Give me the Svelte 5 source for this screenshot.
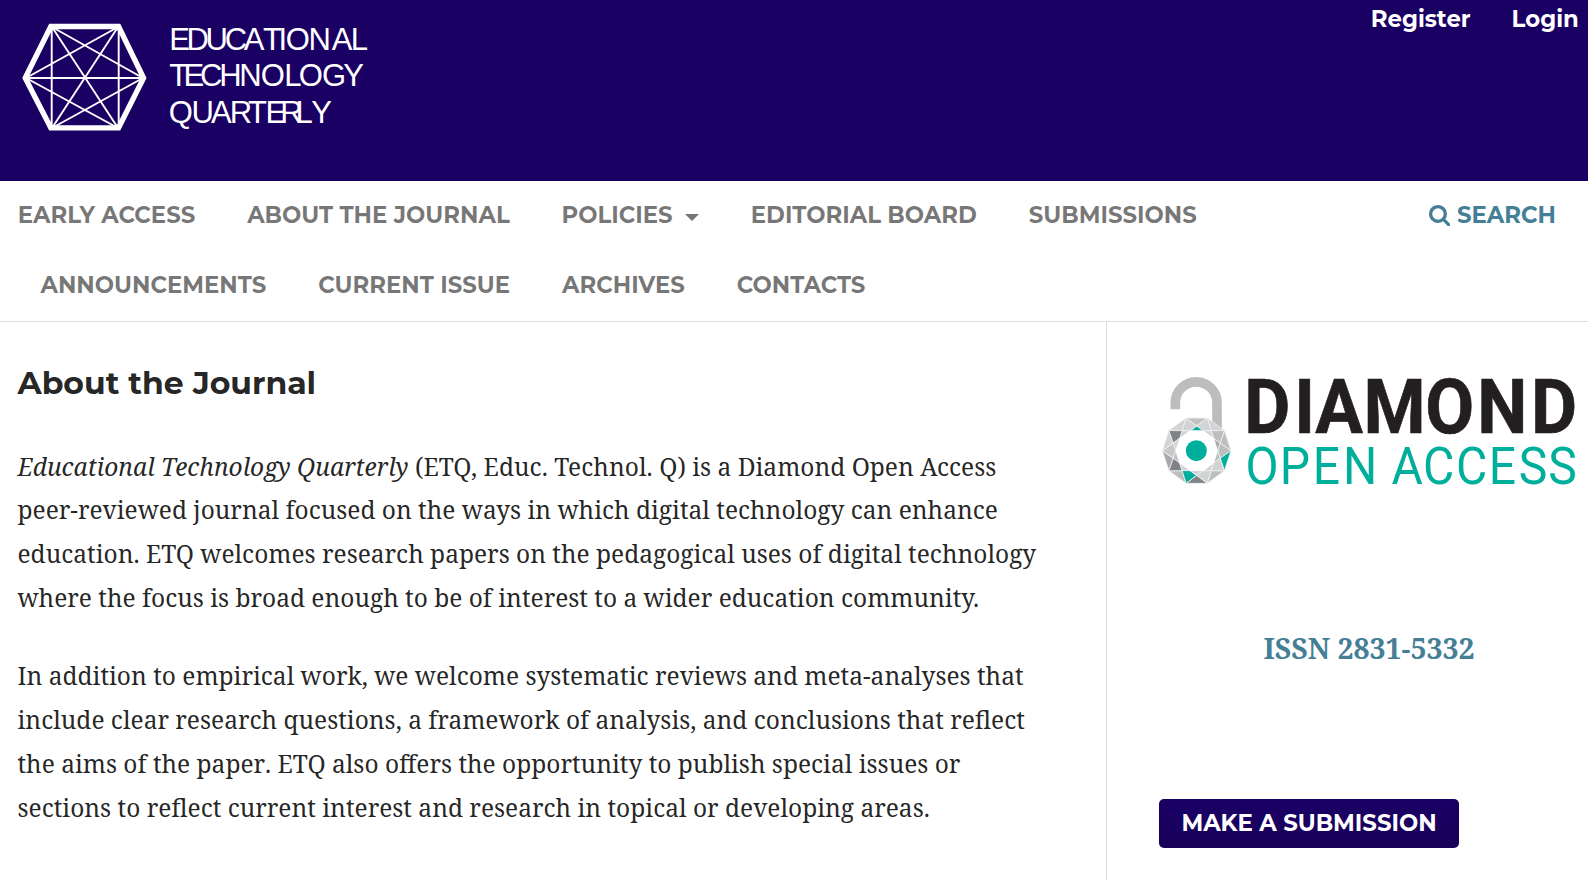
<script>
  const nav = [
    [{ label: 'Early Access' }, { label: 'About the Journal' }, { label: 'Policies', menu: true }, { label: 'Editorial Board' }, { label: 'Submissions' }],
    [{ label: 'Announcements' }, { label: 'Current Issue' }, { label: 'Archives' }, { label: 'Contacts' }]
  ];

  // Facets of the cut gem: a decagon crossed by its {10/3} star.
  const cx = 290, cy = 302;
  const at = (r, deg) => {
    const a = (deg * Math.PI) / 180;
    return `${(cx + r * Math.cos(a)).toFixed(1)},${(cy - r * Math.sin(a)).toFixed(1)}`;
  };
  const steps = [...Array(10).keys()];
  const edgeFill = ['#bcbec0', '#d1d3d4', '#c0c1c3', '#d1d3d4', '#d1d3d4', '#a7a9ac', '#bcbec0', '#808285', '#bcbec0', '#00ae9c'];
  const kiteFill = ['#bcbec0', '#bcbec0', '#d1d3d4', '#d1d3d4', '#808285', '#c6c8ca', '#808285', '#00ae9c', '#d1d3d4', '#d1d3d4'];
  const tipFill = ['#a7a9ac', '#d1d3d4', '#00ae9c', '#d1d3d4', '#d1d3d4', '#bcbec0', '#d1d3d4', '#d1d3d4', '#d1d3d4', '#bcbec0'];
  const facets = steps.flatMap((k) => {
    const v = k * 36, e = v + 18;
    return [
      { fill: edgeFill[k], points: [at(103, v), at(103, v + 36), at(74, e)].join(' ') },
      { fill: kiteFill[k], points: [at(103, v), at(74, e), at(63, v), at(74, v - 18)].join(' ') },
      { fill: tipFill[k], points: [at(63, v), at(63, v + 36), at(74, e)].join(' ') }
    ];
  });
</script>

<header>
  <a class="brand" href="#home" aria-label="Educational Technology Quarterly">
    <svg width="400" height="150" viewBox="0 0 400 150" fill="none" stroke="#fff">
      <path stroke-width="5.3" d="M25.2 78 50.8 26.5H118.6L143.6 78 118.6 127.8H50.8Z" />
      <path stroke-width="1.9" d="M51.7 27V128M118.7 27V128M26 78H143M52 27 118 128M118 27 52 128M26 78 118 27M26 78 118 128M143 78 52 27M143 78 52 128" />
      <g class="wordmark" fill="#fff" stroke="none">
        <text y="50" x="169.3 186.4 205.4 224.8 243.8 263 278.6 285.7 308.6 331.7 350.8">EDUCATIONAL</text>
        <text y="86" x="169.2 183.6 200 219.2 239.2 260.8 284.2 298.8 321.9 343.2">TECHNOLOGY</text>
        <text y="122.8" x="168.8 191.6 211 229.8 248 265.5 280.2 295.4 311.2">QUARTERLY</text>
      </g>
    </svg>
  </a>
  <div class="user">
    <a href="#register">Register</a>
    <a href="#login">Login</a>
  </div>
</header>

<nav>
  <div class="rows">
    {#each nav as row, i}
      <ul class:second={i === 1}>
        {#each row as item}
          <li><a href="#nav">{item.label}{#if item.menu}<span class="caret"></span>{/if}</a></li>
        {/each}
      </ul>
    {/each}
  </div>
  <a class="search" href="#search">
    <svg width="21.2" height="21.2" viewBox="0 0 1664 1664" fill="currentColor">
      <path d="M1152 704q0-185-131.5-316.5t-316.5-131.5-316.5 131.5-131.5 316.5 131.5 316.5 316.5 131.5 316.5-131.5 131.5-316.5zm512 832q0 52-38 90t-90 38q-54 0-90-38l-343-342q-179 124-399 124-143 0-273.5-55.5t-225-150-150-225-55.5-273.5 55.5-273.5 150-225 225-150 273.5-55.5 273.5 55.5 225 150 150 225 55.5 273.5q0 220-124 399l343 343q37 37 37 90z" />
    </svg>
    Search
  </a>
</nav>

<div class="content">
  <main>
    <h2>About the Journal</h2>
    <p><em>Educational Technology Quarterly</em> <span class="open">(ETQ, Educ. Technol. Q)</span> is a Diamond Open Access peer-reviewed journal focused on the ways in which digital technology can enhance education. ETQ welcomes research papers on the pedagogical uses of digital technology where the focus is broad enough to be of interest to a wider education community.</p>
    <p>In addition to empirical work, we welcome systematic reviews and meta-analyses that include clear research questions, a framework of analysis, and conclusions that reflect the aims of the <span class="unkerned">paper.</span> ETQ also offers the opportunity to publish special issues or sections to reflect current interest and research in topical or developing areas.</p>
  </main>
  <aside>
    <svg class="diamond" width="420" height="115" viewBox="177 75 1260 345">
      <path d="M226 178V158A62.5 62.5 0 0 1 351 158V250" fill="none" stroke="#bcbdbf" stroke-width="29" />
      <g stroke="#f1f2f2" stroke-width="2.5" stroke-linejoin="round">
        {#each facets as f}<polygon points={f.points} fill={f.fill} />{/each}
      </g>
      <polygon points={steps.map((k) => at(63, k * 36)).join(' ')} fill="#fff" />
      <circle cx="289" cy="302" r="31.5" fill="#00ae9c" />
      <text class="strong" transform="scale(.93 1)" y="250" x="465 627 694 850 1049 1217 1390">DIAMOND</text>
      <text class="light" transform="scale(.93 1)" y="402" x="469 580 686 784 860 940 1042 1148 1254 1351 1446">OPEN ACCESS</text>
    </svg>
    <a class="issn" href="#issn">ISSN 2831-5332</a>
    <a class="submit" href="#submit">Make a Submission</a>
  </aside>
</div>

<style>
  :global(body) {
    margin: 0;
    overflow: hidden;
    background: #fff;
    color: rgba(0, 0, 0, 0.87);
    font: 24.5px/43.75px "Noto Serif", "DejaVu Serif", serif;
  }
  a { color: inherit; text-decoration: none; }
  header {
    display: flex;
    justify-content: space-between;
    height: 181px;
    background: #1b0064;
    color: #fff;
  }
  .brand svg { display: block; }
  .wordmark text { font: 31px "Liberation Sans", Arial, sans-serif; }
  .user {
    display: flex;
    gap: 41px;
    height: 39px;
    padding-right: 9.2px;
    font: 700 22.8px/39px Montserrat, sans-serif;
  }
  nav {
    display: flex;
    justify-content: space-between;
    box-sizing: border-box;
    height: 141px;
    padding: 13px 32px 0 17.8px;
    border-bottom: 1px solid #ddd;
    color: rgba(0, 0, 0, 0.54);
    font: 700 22.8px/43.75px Montserrat, sans-serif;
    text-transform: uppercase;
  }
  .rows { display: flex; flex-direction: column; gap: 26.25px; }
  ul { display: flex; gap: 51.9px; margin: 0; padding: 0; list-style: none; }
  .second { padding-left: 22.7px; }
  li a { display: flex; align-items: center; }
  .caret {
    margin: 4px 0 0 12.3px;
    border: 7px solid transparent;
    border-top-color: #757575;
    border-bottom-width: 0;
  }
  .search {
    display: flex;
    align-items: center;
    gap: 6.8px;
    height: 43.75px;
    color: #457f96;
  }
  .search svg { margin-top: -1px; }
  .content { display: flex; height: 558px; }
  main {
    box-sizing: border-box;
    width: 1106px;
    padding: 44px 52.5px 0 17.5px;
  }
  h2 { margin: 0 0 43.6px; font: 700 31.5px/35px Montserrat, sans-serif; }
  p { margin: 0 0 34.7px; }
  .open { letter-spacing: 0.04px; }
  .unkerned { font-kerning: none; }
  aside {
    display: flex;
    flex-direction: column;
    flex: 1;
    padding: 53px 9px 0 52px;
    border-left: 1px solid #ddd;
  }
  .diamond { display: block; }
  .strong { font: 700 229px Roboto, sans-serif; fill: #231f20; stroke: #231f20; stroke-width: 2; }
  .light { font: 400 155px Roboto, sans-serif; fill: #00ae9c; }
  .issn {
    margin-top: 137px;
    color: #457f96;
    font-size: 28.4px;
    font-weight: 700;
    text-align: center;
  }
  .submit {
    align-self: flex-start;
    box-sizing: border-box;
    width: 300px;
    margin-top: 128px;
    border-radius: 5px;
    background: #1b0064;
    box-shadow: inset 0 -22.8px 22.8px rgba(0, 0, 0, 0.1);
    color: #fff;
    font: 700 22.8px/49px Montserrat, sans-serif;
    text-align: center;
    text-transform: uppercase;
  }
</style>
